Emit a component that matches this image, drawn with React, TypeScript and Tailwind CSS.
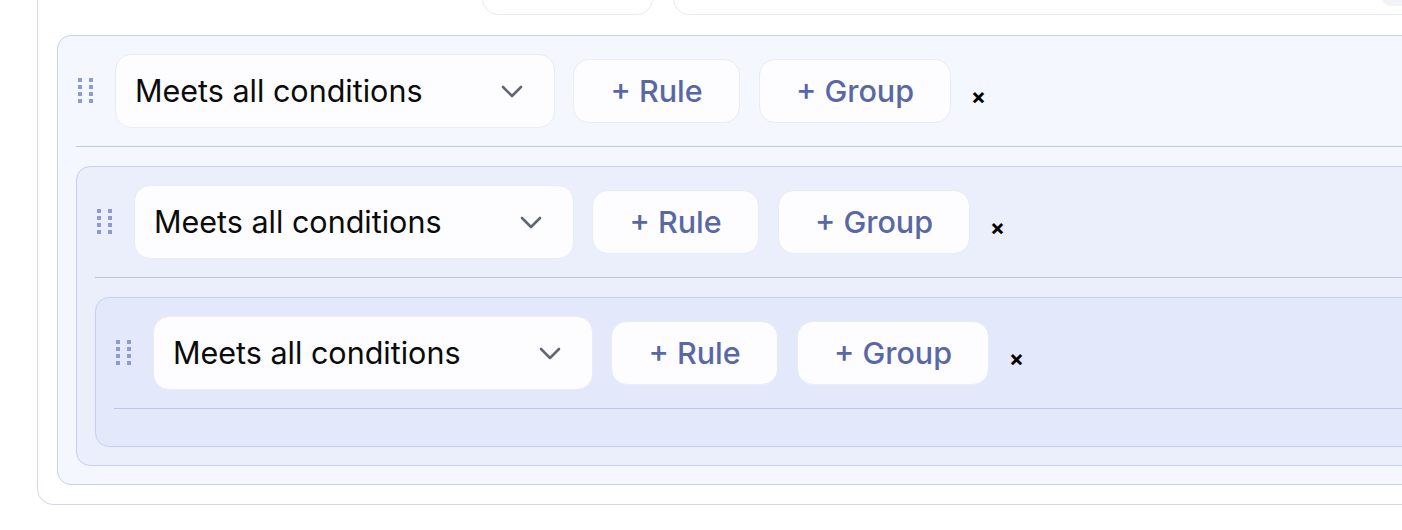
import React from "react";

const groupBg = ["bg-[#f4f7fe]", "bg-[#eaeffb]", "bg-[#e3e9fb]"];

function DragHandle() {
  return (
    <svg width="16" height="26" viewBox="0 0 16 26" className="ml-[2px] mr-[21px] shrink-0">
      {[0, 1, 2, 3].map((r) => (
        <g key={r} fill="#8c9bd6">
          <rect x="0" y={r * 7} width="4" height="4" />
          <rect x="11" y={r * 7} width="4" height="4" />
        </g>
      ))}
    </svg>
  );
}

function Chevron() {
  return (
    <svg width="22" height="13" viewBox="0 0 22 13" className="shrink-0">
      <polyline points="2,2 11,11 20,2" fill="none" stroke="#5f6674" strokeWidth="2.6" strokeLinecap="round" strokeLinejoin="round" />
    </svg>
  );
}

function Row() {
  return (
    <div className="flex items-center">
      <DragHandle />
      <div className="flex h-[74px] w-[440px] shrink-0 items-center justify-between rounded-[16px] border border-[#e8ecf4] bg-[#fdfdff] pl-[19px] pr-[31px] text-[30.5px] text-[#0b0b0b]">
        <span>Meets all conditions</span>
        <Chevron />
      </div>
      <button className="ml-[18px] h-[64px] w-[167px] shrink-0 rounded-[16px] border border-[#e8ecf4] bg-[#fdfdff] text-[30.5px] font-medium text-[#5867a6]">
        + Rule
      </button>
      <button className="ml-[19px] h-[64px] w-[192px] shrink-0 rounded-[16px] border border-[#e8ecf4] bg-[#fdfdff] text-[30.5px] font-medium text-[#5867a6]">
        + Group
      </button>
      <span className="ml-[20px] mt-[10px] text-[22px] font-bold leading-none text-black">×</span>
    </div>
  );
}

function Group({ depth }: { depth: number }) {
  return (
    <div className={`rounded-[14px] border border-[#c6cfee] ${groupBg[depth]} px-[18px] pb-[18px] pt-[18px]`}>
      <Row />
      <div className="mt-[18px] border-t border-[#bcc6ea]" />
      <div className="mt-[19px]">{depth < 2 && <Group depth={depth + 1} />}</div>
    </div>
  );
}

export default function App() {
  return (
    <div className="h-[530px] w-full overflow-hidden bg-white" style={{ fontFamily: "Inter, 'Liberation Sans', sans-serif" }}>
      <div className="ml-[37px] mt-[-68px] w-[1480px] rounded-[16px] border border-[#d3d6ee] bg-white px-[19px] pb-[19px] pt-[19px]">
        <div className="flex h-[63px]">
          <div className="ml-[425px] h-full w-[171px] rounded-[16px] border border-[#e6eaf0] bg-white" />
          <div className="ml-[20px] flex h-full flex-1 items-center rounded-[16px] border border-[#e6eaf0] bg-white">
            <div className="ml-[706px] h-[45px] w-[80px] rounded-[12px] bg-[#f1f3f6]" />
          </div>
        </div>
        <div className="mt-[20px]">
          <Group depth={0} />
        </div>
      </div>
    </div>
  );
}
